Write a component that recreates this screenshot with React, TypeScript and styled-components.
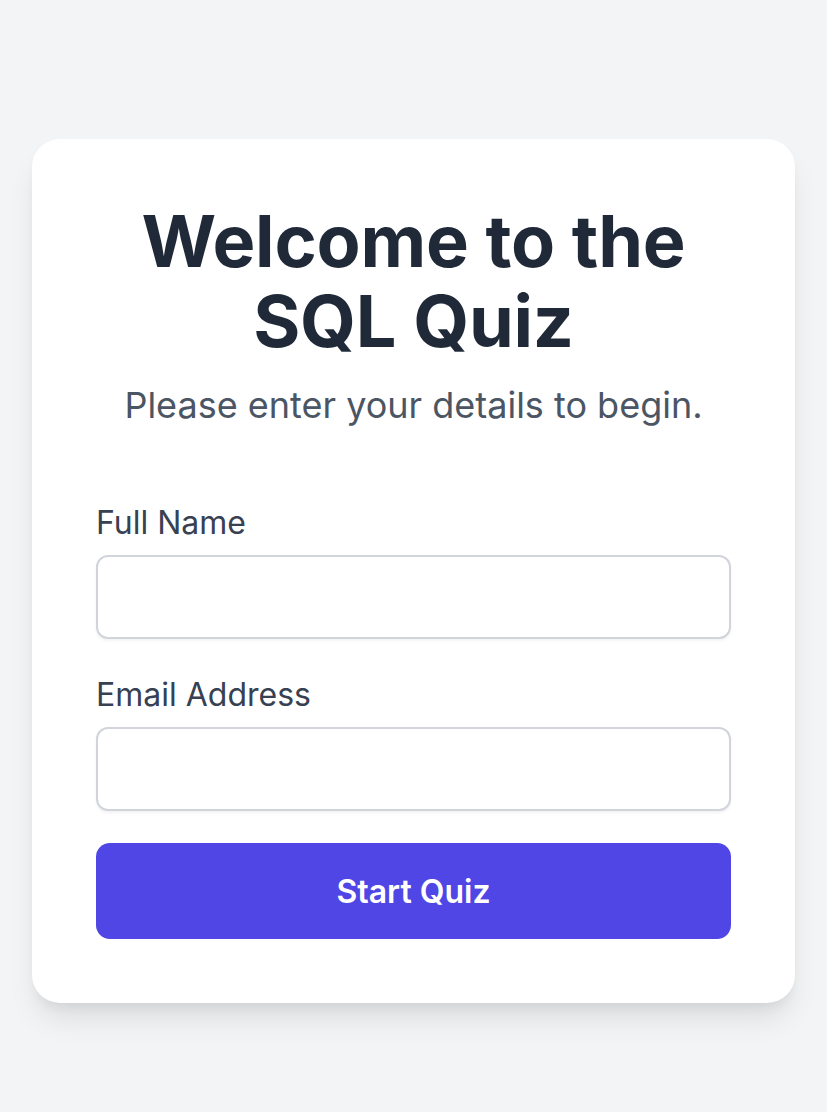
import React from "react";
import styled, { createGlobalStyle } from "styled-components";

const GlobalStyle = createGlobalStyle`
  html, body {
    margin: 0;
    padding: 0;
    background: #f3f4f6;
    font-family: Inter, "Noto Sans", sans-serif;
  }
  * {
    box-sizing: border-box;
  }
`;

const Page = styled.main`
  min-height: 1112px;
  padding: 139px 32px 32px;
`;

const Card = styled.section`
  background: #ffffff;
  border-radius: 28px;
  padding: 62px 64px 64px;
  box-shadow: 0 20px 30px -6px rgba(0, 0, 0, 0.1), 0 8px 12px -4px rgba(0, 0, 0, 0.06);
`;

const Header = styled.header`
  text-align: center;
  margin-bottom: 66px;
`;

const Title = styled.h1`
  margin: 0;
  font-size: 72px;
  line-height: 80px;
  font-weight: 700;
  letter-spacing: -0.2px;
  color: #1f2937;
`;

const Subtitle = styled.p`
  margin: 16px 0 0;
  font-size: 36px;
  line-height: 56px;
  color: #4b5563;
`;

const Form = styled.form`
  display: flex;
  flex-direction: column;
  gap: 32px;
`;

const Field = styled.div`
  display: flex;
  flex-direction: column;
  gap: 8px;
`;

const Label = styled.label`
  font-size: 32px;
  line-height: 48px;
  font-weight: 400;
  color: #374151;
`;

const Input = styled.input`
  width: 100%;
  height: 84px;
  padding: 0 24px;
  border: 2px solid #d1d5db;
  border-radius: 12px;
  font: inherit;
  font-size: 32px;
  color: #1f2937;
  background: #ffffff;
  box-shadow: 0 2px 3px rgba(0, 0, 0, 0.05);
  outline: none;
`;

const Button = styled.button`
  height: 96px;
  border: none;
  border-radius: 14px;
  background: #4f46e5;
  color: #ffffff;
  font-family: inherit;
  font-size: 32px;
  font-weight: 600;
  cursor: pointer;
`;

export default function App() {
  return (
    <>
      <GlobalStyle />
      <Page>
        <Card>
          <Header>
            <Title>
              Welcome to the
              <br />
              SQL Quiz
            </Title>
            <Subtitle>Please enter your details to begin.</Subtitle>
          </Header>
          <Form onSubmit={(e) => e.preventDefault()}>
            <Field>
              <Label htmlFor="name">Full Name</Label>
              <Input id="name" type="text" />
            </Field>
            <Field>
              <Label htmlFor="email">Email Address</Label>
              <Input id="email" type="email" />
            </Field>
            <Button type="submit">Start Quiz</Button>
          </Form>
        </Card>
      </Page>
    </>
  );
}
